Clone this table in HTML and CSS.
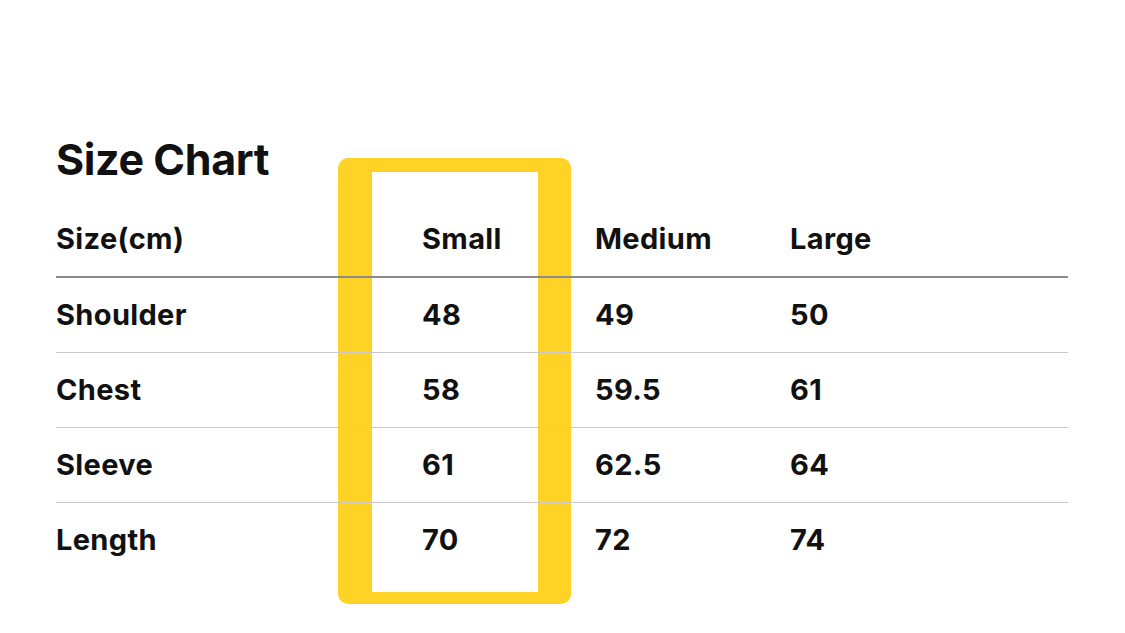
FILE: index.html
```html
<!DOCTYPE html>
<html lang="en">
<head>
<meta charset="utf-8">
<title>Size Chart</title>
<link rel="stylesheet" href="styles.css">
</head>
<body>
<main class="page">
  <h1 class="title">Size Chart</h1>
  <div class="chart">
    <div class="highlight"></div>
    <div class="row head">
      <span class="cell">Size(cm)</span>
      <span class="cell">Small</span>
      <span class="cell">Medium</span>
      <span class="cell">Large</span>
    </div>
    <div class="row">
      <span class="cell">Shoulder</span>
      <span class="cell">48</span>
      <span class="cell">49</span>
      <span class="cell">50</span>
    </div>
    <div class="row">
      <span class="cell">Chest</span>
      <span class="cell">58</span>
      <span class="cell">59.5</span>
      <span class="cell">61</span>
    </div>
    <div class="row">
      <span class="cell">Sleeve</span>
      <span class="cell">61</span>
      <span class="cell">62.5</span>
      <span class="cell">64</span>
    </div>
    <div class="row last">
      <span class="cell">Length</span>
      <span class="cell">70</span>
      <span class="cell">72</span>
      <span class="cell">74</span>
    </div>
  </div>
</main>
</body>
</html>
```

FILE: styles.css
```css
* { box-sizing: border-box; }
html, body {
  margin: 0;
  padding: 0;
  background: #ffffff;
}
body {
  font-family: Inter, "Liberation Sans", Arial, sans-serif;
  color: #111111;
  width: 1125px;
  height: 633px;
  overflow: hidden;
}
.page {
  padding: 133px 57px 0 56px;
  display: flex;
  flex-direction: column;
}
.title {
  margin: 0 0 18px 0;
  font-size: 43px;
  line-height: 52px;
  font-weight: 700;
  letter-spacing: -0.4px;
}
.chart {
  position: relative;
  display: flex;
  flex-direction: column;
}
.highlight {
  position: absolute;
  left: 282px;
  top: -45px;
  width: 233px;
  height: 446px;
  border-style: solid;
  border-color: #ffd325;
  border-width: 14px 33px 12px 34px;
  border-radius: 10px;
  z-index: 0;
}
.row {
  position: relative;
  z-index: 1;
  height: 75px;
  display: grid;
  grid-template-columns: 366px 173px 195px 1fr;
  align-items: center;
  border-bottom: 1.5px solid #c9c9c9;
  font-size: 29px;
  font-weight: 700;
  letter-spacing: 0.35px;
}
.row.head {
  border-bottom: 2px solid #8a8a8a;
}
.row.last {
  border-bottom: none;
}
.cell {
  white-space: nowrap;
  padding-bottom: 2px;
}
```
